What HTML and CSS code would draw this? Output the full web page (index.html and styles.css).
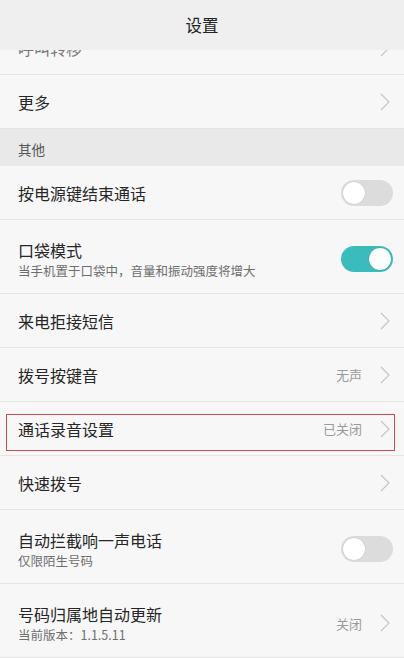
FILE: index.html
```html
<!DOCTYPE html>
<html lang="zh-CN">
<head>
<meta charset="utf-8">
<title>设置</title>
<link rel="stylesheet" href="styles.css">
</head>
<body>
<div class="screen">
  <header class="topbar">设置</header>
  <div class="list">
    <div class="list-inner">
      <div class="row row-faded">
        <div class="row-text"><div class="title">呼叫转移</div></div>
        <svg class="chev" viewBox="0 0 10 18" width="10" height="18"><polyline points="1,1 9,9 1,17"/></svg>
      </div>
      <div class="row">
        <div class="row-text"><div class="title">更多</div></div>
        <svg class="chev" viewBox="0 0 10 18" width="10" height="18"><polyline points="1,1 9,9 1,17"/></svg>
      </div>
      <div class="section">其他</div>
      <div class="row">
        <div class="row-text"><div class="title">按电源键结束通话</div></div>
        <span class="switch"><span class="knob"></span></span>
      </div>
      <div class="row row-tall">
        <div class="row-text">
          <div class="title">口袋模式</div>
          <div class="sub">当手机置于口袋中，音量和振动强度将增大</div>
        </div>
        <span class="switch on"><span class="knob"></span></span>
      </div>
      <div class="row">
        <div class="row-text"><div class="title">来电拒接短信</div></div>
        <svg class="chev" viewBox="0 0 10 18" width="10" height="18"><polyline points="1,1 9,9 1,17"/></svg>
      </div>
      <div class="row">
        <div class="row-text"><div class="title">拨号按键音</div></div>
        <span class="value">无声</span>
        <svg class="chev" viewBox="0 0 10 18" width="10" height="18"><polyline points="1,1 9,9 1,17"/></svg>
      </div>
      <div class="row row-marked">
        <div class="row-text"><div class="title">通话录音设置</div></div>
        <span class="value">已关闭</span>
        <svg class="chev" viewBox="0 0 10 18" width="10" height="18"><polyline points="1,1 9,9 1,17"/></svg>
        <span class="mark"></span>
      </div>
      <div class="row">
        <div class="row-text"><div class="title">快速拨号</div></div>
        <svg class="chev" viewBox="0 0 10 18" width="10" height="18"><polyline points="1,1 9,9 1,17"/></svg>
      </div>
      <div class="row row-tall">
        <div class="row-text">
          <div class="title">自动拦截响一声电话</div>
          <div class="sub">仅限陌生号码</div>
        </div>
        <span class="switch"><span class="knob"></span></span>
      </div>
      <div class="row row-tall">
        <div class="row-text">
          <div class="title">号码归属地自动更新</div>
          <div class="sub">当前版本：1.1.5.11</div>
        </div>
        <span class="value">关闭</span>
        <svg class="chev" viewBox="0 0 10 18" width="10" height="18"><polyline points="1,1 9,9 1,17"/></svg>
      </div>
    </div>
  </div>
</div>
</body>
</html>
```

FILE: styles.css
```css
* { box-sizing: border-box; }

html, body {
  margin: 0;
  padding: 0;
  background: #f7f7f7;
}

body {
  font-family: "Noto Sans CJK SC", "Noto Sans", "Liberation Sans", sans-serif;
  color: #262626;
}

.screen {
  width: 404px;
  height: 658px;
  overflow: hidden;
  display: flex;
  flex-direction: column;
}

.topbar {
  height: 50px;
  flex: none;
  background: #efefef;
  display: flex;
  align-items: center;
  justify-content: center;
  font-size: 16.5px;
  color: #222;
}

.list {
  flex: 1;
  overflow: hidden;
}

.list-inner {
  margin-top: -29px;
}

.row {
  position: relative;
  height: 54px;
  border-bottom: 1px solid #e4e4e4;
  display: flex;
  align-items: center;
  padding: 0 11px 0 18px;
  background: #f7f7f7;
}

.row-tall {
  height: 74px;
  padding-top: 5px;
}

.row-faded .title {
  color: #777;
}

.row-text {
  flex: 1;
  min-width: 0;
  display: flex;
  flex-direction: column;
}

.title {
  font-size: 16px;
  line-height: 22px;
  color: #262626;
}

.sub {
  font-size: 12.5px;
  line-height: 18px;
  color: #6e6e6e;
  margin-top: 1px;
}

.value {
  font-size: 13px;
  color: #9a9a9a;
  margin-right: 18px;
}

.chev {
  flex: none;
  margin-right: 3px;
  fill: none;
  stroke: #c4c4c4;
  stroke-width: 1.1;
}

.section {
  height: 37px;
  background: #e9e9e9;
  display: flex;
  align-items: center;
  padding: 2px 0 0 18px;
  font-size: 13.5px;
  color: #555;
}

.switch {
  flex: none;
  width: 52px;
  height: 26px;
  border-radius: 13px;
  background: #dcdcdc;
  padding: 2px;
  display: flex;
  justify-content: flex-start;
}

.switch.on {
  background: #3bbcbc;
  justify-content: flex-end;
}

.knob {
  width: 22px;
  height: 22px;
  border-radius: 50%;
  background: #fff;
  box-shadow: 0 0 1px rgba(0, 0, 0, 0.25);
}

.mark {
  position: absolute;
  left: 6px;
  top: 12px;
  width: 389px;
  height: 37px;
  border: 1px solid #cc4a58;
  pointer-events: none;
}
```
